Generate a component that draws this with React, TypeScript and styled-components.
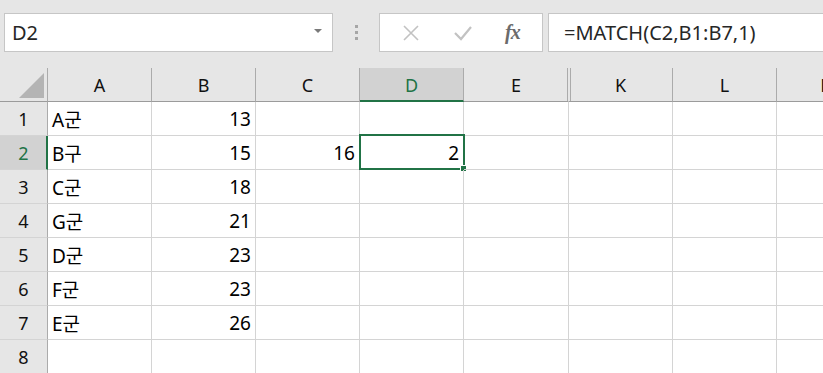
import React from 'react';
import styled, {createGlobalStyle} from "styled-components";

const GlobalStyle = createGlobalStyle`
  html, body {
    margin: 0;
    padding: 0;
    background: #ffffff;
    overflow: hidden;
  }
  body {
    font-family: "Noto Sans", "Noto Sans CJK KR", sans-serif;
  }
`

const green = '#217346';

const SWindow = styled.div`
  width: 823px;
  height: 373px;
  overflow: hidden;
  background: #ffffff;
`

const SFormulaBar = styled.div`
  height: 68px;
  background: #e6e6e6;
  display: flex;
  align-items: flex-start;
  padding: 13px 0 0 4px;
  box-sizing: border-box;
`

const SNameBox = styled.div`
  width: 329px;
  height: 39px;
  flex-shrink: 0;
  box-sizing: border-box;
  background: #ffffff;
  border: 1px solid #c6c6c6;
  display: flex;
  align-items: center;
  justify-content: space-between;
  padding: 0 10px 0 7px;
  font-size: 20px;
  color: #262626;
`

const SCaret = styled.span`
  width: 0;
  height: 0;
  border-left: 4px solid transparent;
  border-right: 4px solid transparent;
  border-top: 4px solid #7a7a7a;
  margin-top: -4px;
`

const SGrip = styled.div`
  width: 46px;
  height: 39px;
  flex-shrink: 0;
  display: flex;
  flex-direction: column;
  align-items: center;
  justify-content: center;
  gap: 3px;

  span {
    width: 3px;
    height: 3px;
    background: #a6a6a6;
  }
`

const SButtons = styled.div`
  width: 164px;
  height: 39px;
  flex-shrink: 0;
  box-sizing: border-box;
  background: #ffffff;
  border: 1px solid #c6c6c6;
  display: flex;
  align-items: center;
  justify-content: space-around;
  padding: 0 6px;
`

const SFx = styled.span`
  font-family: "Liberation Serif", serif;
  font-style: italic;
  font-weight: bold;
  font-size: 20px;
  color: #6b6b6b;
  letter-spacing: -1px;
`

const SFormula = styled.div`
  flex: 1;
  height: 39px;
  margin-left: 5px;
  box-sizing: border-box;
  background: #ffffff;
  border: 1px solid #c6c6c6;
  border-right: none;
  display: flex;
  align-items: center;
  padding-left: 15px;
  font-size: 20px;
  color: #262626;
`

const SGrid = styled.div`
  display: grid;
  grid-template-columns: 48px 104px 104px 104px 104px 105px 104px 104px 104px;
  grid-auto-rows: 34px;
`

const SCorner = styled.div`
  background: #e6e6e6;
  border-right: 1px solid #ababab;
  border-bottom: 1px solid #9b9b9b;
  box-sizing: border-box;
  position: relative;

  &::after {
    content: '';
    position: absolute;
    right: 3px;
    bottom: 3px;
    width: 0;
    height: 0;
    border-left: 25px solid transparent;
    border-bottom: 25px solid #b4b4b4;
  }
`

const SColHead = styled.div<{ $active?: boolean; $gapBefore?: boolean; $gapAfter?: boolean }>`
  box-sizing: border-box;
  background: ${p => p.$active ? '#d2d2d2' : '#e6e6e6'};
  border-right: 1px solid ${p => p.$gapBefore ? '#e6e6e6' : '#ababab'};
  border-bottom: ${p => p.$active ? `2px solid ${green}` : '1px solid #9b9b9b'};
  box-shadow: ${p => p.$gapBefore
    ? 'inset -1px 0 0 #ababab'
    : p.$gapAfter ? 'inset 1px 0 0 #e6e6e6, inset 2px 0 0 #ababab' : 'none'};
  color: ${p => p.$active ? green : '#111'};
  font-size: 18px;
  display: flex;
  align-items: center;
  justify-content: center;
  padding-top: ${p => p.$active ? '1px' : '0'};
`

const SRowHead = styled.div<{ $active?: boolean }>`
  box-sizing: border-box;
  background: ${p => p.$active ? '#d2d2d2' : '#e6e6e6'};
  border-right: ${p => p.$active ? `2px solid ${green}` : '1px solid #ababab'};
  border-bottom: 1px solid #d4d4d4;
  color: ${p => p.$active ? green : '#111'};
  font-size: 18px;
  display: flex;
  align-items: center;
  justify-content: center;
  padding-left: ${p => p.$active ? '1px' : '0'};
`

const SCell = styled.div<{ $num?: boolean }>`
  box-sizing: border-box;
  border-right: 1px solid #d4d4d4;
  border-bottom: 1px solid #d4d4d4;
  font-size: 19px;
  color: #000;
  display: flex;
  align-items: center;
  justify-content: ${p => p.$num ? 'flex-end' : 'flex-start'};
  padding: 0 4px 0 4px;
  position: relative;
  white-space: nowrap;
`

const SSelection = styled.div`
  position: absolute;
  left: -1px;
  top: -2px;
  right: -2px;
  bottom: -1px;
  border: 2px solid ${green};
  pointer-events: none;

  &::after {
    content: '';
    position: absolute;
    right: -3px;
    bottom: -3px;
    width: 5px;
    height: 5px;
    background: ${green};
    border-left: 1px solid #ffffff;
    border-top: 1px solid #ffffff;
  }
`

const columns = ['A', 'B', 'C', 'D', 'E', 'K', 'L', 'M'];

const rows: { a: string; b: string; c?: string; d?: string }[] = [
    {a: 'A군', b: '13'},
    {a: 'B구', b: '15', c: '16', d: '2'},
    {a: 'C군', b: '18'},
    {a: 'G군', b: '21'},
    {a: 'D군', b: '23'},
    {a: 'F군', b: '23'},
    {a: 'E군', b: '26'},
    {a: '', b: ''},
];

const CrossIcon = () => (
    <svg width="18" height="18" viewBox="0 0 18 18">
        <path d="M2 2 L16 16 M16 2 L2 16" stroke="#c2c2c2" strokeWidth="1.6" fill="none"/>
    </svg>
);

const CheckIcon = () => (
    <svg width="20" height="18" viewBox="0 0 20 18">
        <path d="M2 9 L8 15 L18 3" stroke="#c2c2c2" strokeWidth="2.2" fill="none"/>
    </svg>
);

const App = () => {
    return (
        <SWindow>
            <GlobalStyle/>
            <SFormulaBar>
                <SNameBox>
                    D2
                    <SCaret/>
                </SNameBox>
                <SGrip>
                    <span/><span/><span/>
                </SGrip>
                <SButtons>
                    <CrossIcon/>
                    <CheckIcon/>
                    <SFx>fx</SFx>
                </SButtons>
                <SFormula>=MATCH(C2,B1:B7,1)</SFormula>
            </SFormulaBar>
            <SGrid>
                <SCorner/>
                {columns.map(col => (
                    <SColHead key={col} $active={col === 'D'} $gapBefore={col === 'E'} $gapAfter={col === 'K'}>
                        {col}
                    </SColHead>
                ))}
                {rows.map((row, i) => (
                    <React.Fragment key={i}>
                        <SRowHead $active={i === 1}>{i + 1}</SRowHead>
                        <SCell>{row.a}</SCell>
                        <SCell $num>{row.b}</SCell>
                        <SCell $num>{row.c}</SCell>
                        <SCell $num>
                            {row.d}
                            {i === 1 && <SSelection/>}
                        </SCell>
                        <SCell/>
                        <SCell/>
                        <SCell/>
                        <SCell/>
                    </React.Fragment>
                ))}
            </SGrid>
        </SWindow>
    );
};

export default App;
